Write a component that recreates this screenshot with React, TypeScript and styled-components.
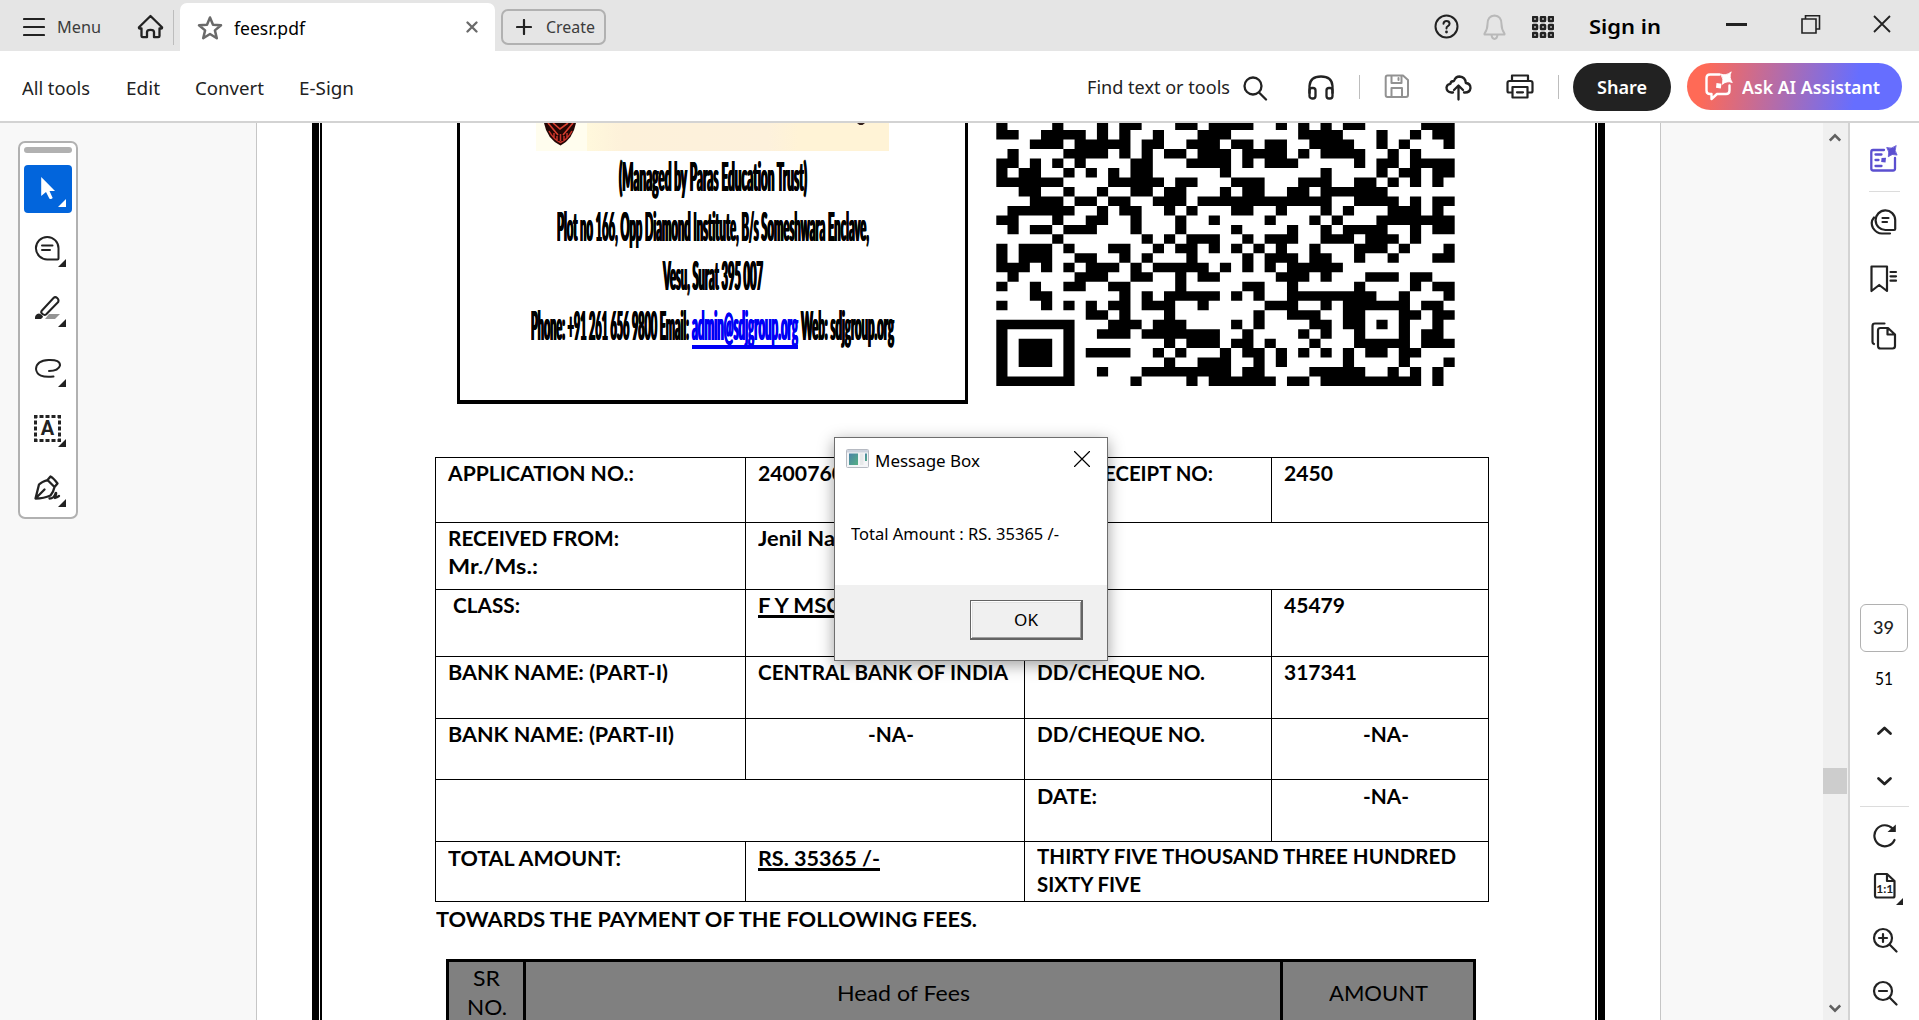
import React, { ReactNode, useLayoutEffect, useRef, useState } from "react";
import styled, { createGlobalStyle, css } from "styled-components";

const UI = `"Noto Sans", "Open Sans", sans-serif`;
const DOC = `Lato, "Liberation Sans", sans-serif`;

const Global = createGlobalStyle`
  html, body { margin: 0; padding: 0; overflow: hidden; }
  *, *::before, *::after { box-sizing: border-box; }
  body { font-family: ${UI}; color: #222; }
`;

/* ---------- text that is condensed to a set width ---------- */
const FitBox = styled.span<{ $w: number }>`
  display: inline-block;
  flex: none;
  width: ${(p) => p.$w}px;
  white-space: nowrap;
  vertical-align: top;
`;
const FitInner = styled.span`
  display: inline-block;
  transform-origin: 0 50%;
`;
function Fit({ w, children }: { w: number; children: ReactNode }) {
  const ref = useRef<HTMLSpanElement>(null);
  const [scale, setScale] = useState(1);
  useLayoutEffect(() => {
    if (ref.current) setScale(w / ref.current.getBoundingClientRect().width);
  }, []);
  return (
    <FitBox $w={w}>
      <FitInner ref={ref} style={{ transform: `scaleX(${scale})` }}>{children}</FitInner>
    </FitBox>
  );
}

/* ---------- shell ---------- */
const Shell = styled.div`
  width: 1919px;
  height: 1020px;
  display: flex;
  flex-direction: column;
  background: #fff;
  overflow: hidden;
`;
const TabBar = styled.header`
  height: 51px;
  flex: none;
  display: flex;
  align-items: flex-start;
  background: #e5e5e5;
`;
const ToolBar = styled.nav`
  height: 72px;
  flex: none;
  display: flex;
  align-items: flex-start;
  border-bottom: 2px solid #d3d3d3;
`;
const Slot = styled.div<{ $l?: number; $t?: number; $color?: string }>`
  flex: none;
  display: flex;
  margin-left: ${(p) => p.$l ?? 0}px;
  margin-top: ${(p) => p.$t ?? 0}px;
  color: ${(p) => p.$color ?? "#222"};
`;
const Label = styled.span<{ $l?: number; $t?: number; $size: number; $weight?: number; $color?: string }>`
  flex: none;
  display: block;
  margin-left: ${(p) => p.$l ?? 0}px;
  margin-top: ${(p) => p.$t ?? 0}px;
  font-size: ${(p) => p.$size}px;
  line-height: 26px;
  font-weight: ${(p) => p.$weight ?? 400};
  color: ${(p) => p.$color ?? "#222"};
`;
const Rule = styled.div<{ $l: number; $t: number; $h: number }>`
  flex: none;
  width: 1px;
  height: ${(p) => p.$h}px;
  margin: ${(p) => p.$t}px 0 0 ${(p) => p.$l}px;
  background: #bdbdbd;
`;
const FileTab = styled.div`
  flex: none;
  width: 315px;
  height: 48px;
  margin: 3px 0 0 6px;
  display: flex;
  align-items: flex-start;
  background: #fff;
  border-radius: 7px 7px 0 0;
`;
const CreateButton = styled.div`
  flex: none;
  width: 105px;
  height: 36px;
  margin: 9px 0 0 6px;
  display: flex;
  align-items: flex-start;
  border: 2px solid #b1b1b1;
  border-radius: 7px;
`;
const pill = css`
  flex: none;
  display: flex;
  align-items: flex-start;
  margin-top: 12px;
  border-radius: 24px;
`;
const SharePill = styled.div`
  ${pill}
  width: 98px;
  height: 48px;
  margin-left: 14px;
  background: #222;
`;
const AiPill = styled.div`
  ${pill}
  width: 215px;
  height: 47px;
  margin-left: 16px;
  background: linear-gradient(100deg, #ff6a56 8%, #666eff 78%);
`;

/* ---------- body ---------- */
const Body = styled.main`
  flex: 1;
  min-height: 0;
  display: flex;
`;
const Gutter = styled.aside`
  width: 256px;
  flex: none;
  padding: 18px 0 0 18px;
  background: #f8f8f8;
`;
const Palette = styled.div`
  width: 60px;
  height: 378px;
  padding: 4px;
  border: 2px solid #b1b1b1;
  border-radius: 7px;
  background: #fff;
  display: flex;
  flex-direction: column;
  gap: 12px;
`;
const Grip = styled.div`
  height: 6px;
  flex: none;
  border-radius: 3px;
  background: #b1b1b1;
`;
const ToolButton = styled.div<{ $active?: boolean }>`
  width: 48px;
  height: 48px;
  flex: none;
  border-radius: 4px;
  color: ${(p) => (p.$active ? "#fff" : "#222")};
  background: ${(p) => (p.$active ? "#0265dc" : "transparent")};
`;
const Page = styled.section`
  width: 1405px;
  flex: none;
  border: solid #c6c6c6;
  border-width: 0 1px;
  padding: 0 55px;
  background: #fff;
  overflow: hidden;
`;
const OuterFrame = styled.div`
  height: 1000px;
  border: solid #000;
  border-width: 0 7px;
  padding: 0 1px;
`;
const InnerFrame = styled.div`
  height: 100%;
  border: solid #000;
  border-width: 0 2px;
  font-family: ${DOC};
  color: #000;
`;
const Letterhead = styled.div`
  height: 281px;
  display: flex;
  margin-left: 135px;
`;
const AddressBox = styled.div`
  width: 511px;
  border: solid #000;
  border-width: 0 3px 4px 3px;
  display: flex;
  flex-direction: column;
  align-items: center;
`;
const Banner = styled.div`
  width: 353px;
  height: 28px;
  flex: none;
  display: flex;
`;
const AddressLine = styled.div`
  height: 49.6px;
  flex: none;
  line-height: 50px;
  font-size: 39px;
  font-weight: 900;
  text-shadow: 1.6px 0 0 currentColor, -1.6px 0 0 currentColor;
  display: flex;
  justify-content: center;
`;
const MailLink = styled.span`
  display: block;
  height: 49px;
  margin: 0 3px;
  color: #0000f5;
  border-bottom: 4px solid #0000f5;
`;
const QrHolder = styled.div`
  margin-left: 28px;
  flex: none;
`;
const Grid = styled.div`
  width: 1054px;
  margin: 53px 0 0 113px;
  display: grid;
  grid-template-columns: 310px 279px 247px 217px;
  grid-template-rows: 65px 67px 67px 62px 61px 62px 60px;
  border: solid #000;
  border-width: 0 1px 1px 0;
`;
const Cell = styled.div<{ $span?: number; $center?: boolean; $l?: number; $t?: number }>`
  grid-column: span ${(p) => p.$span ?? 1};
  border: solid #000;
  border-width: 1px 0 0 1px;
  padding: ${(p) => p.$t ?? 1}px 0 0 ${(p) => p.$l ?? 12.4}px;
  font-size: 20px;
  line-height: 28px;
  font-weight: 700;
  display: flex;
  flex-direction: column;
  align-items: ${(p) => (p.$center ? "center" : "flex-start")};
`;
const Underlined = styled.span`
  display: block;
  height: 27px;
  border-bottom: 3px solid #000;
`;
const Towards = styled.div`
  margin: 3px 0 0 113.5px;
  height: 28px;
  font-size: 20px;
  line-height: 28px;
  font-weight: 700;
`;
const FeesHead = styled.div`
  width: 1030px;
  height: 80px;
  margin: 26px 0 0 124px;
  display: grid;
  grid-template-columns: 74px 754px 190px;
  column-gap: 3px;
  padding: 3px 3px 0;
  background: #000;
`;
const FeesCell = styled.div<{ $t: number }>`
  background: #808080;
  padding: ${(p) => p.$t}px 0 0 1px;
  font-size: 21px;
  line-height: 29px;
  display: flex;
  flex-direction: column;
  align-items: center;
`;
const Backdrop = styled.div`
  flex: 1;
  background: #f8f8f8;
`;
const ScrollTrack = styled.div`
  width: 25px;
  flex: none;
  display: flex;
  flex-direction: column;
  background: #f0f0f0;
  color: #606060;
`;
const Thumb = styled.div`
  width: 24px;
  height: 26px;
  margin: 625px 0 202px;
  background: #cdcdcd;
`;
const Rail = styled.aside`
  width: 71px;
  flex: none;
  border-left: 2px solid #d3d3d3;
  display: flex;
  flex-direction: column;
  align-items: flex-start;
`;
const RailRule = styled.div<{ $l: number; $t: number; $w: number }>`
  width: ${(p) => p.$w}px;
  height: 1px;
  flex: none;
  margin: ${(p) => p.$t}px 0 0 ${(p) => p.$l}px;
  background: #dcdcdc;
`;
const PageInput = styled.div`
  width: 48px;
  height: 48px;
  flex: none;
  margin: 254px 0 0 10px;
  border: 1px solid #b1b1b1;
  border-radius: 6px;
  padding-right: 2px;
  display: flex;
  justify-content: center;
  font-family: ${DOC};
  font-size: 18px;
  line-height: 44px;
  font-weight: 500;
`;
const PageCount = styled.div`
  flex: none;
  margin: 13px 0 1px 25px;
  height: 26px;
  font-family: ${DOC};
  font-size: 18px;
  line-height: 26px;
  color: #000;
`;

/* ---------- message box ---------- */
const Dialog = styled.div`
  position: absolute;
  left: 834px;
  top: 437px;
  width: 274px;
  height: 224px;
  border: 1px solid #6e6e6e;
  background: #fff;
  box-shadow: 0 4px 15px rgba(0, 0, 0, 0.38);
  display: flex;
  flex-direction: column;
  color: #000;
`;
const DialogTitle = styled.div`
  height: 54px;
  display: flex;
  align-items: flex-start;
`;
const DialogText = styled.div`
  flex: 1;
  padding: 29px 0 0 16px;
  font-size: 16px;
  line-height: 26px;
`;
const DialogFooter = styled.div`
  height: 75px;
  padding: 15px 0 0 135px;
  background: #f0f0f0;
`;
const OkButton = styled.div`
  width: 113px;
  height: 40px;
  display: flex;
  justify-content: center;
  font-size: 16px;
  line-height: 34px;
  padding-top: 2px;
  border: 1px solid #646464;
  border-right-width: 2px;
  border-bottom-width: 2px;
  box-shadow: inset 1px 1px 0 #fff, inset -1px -1px 0 #a0a0a0, inset 2px 2px 0 #e3e3e3;
`;

/* ---------- icons ---------- */
type IconProps = { w: number; h: number; sw?: number; children: ReactNode };
const Svg = styled.svg`
  display: block;
`;
const Icon = ({ w, h, sw = 2, children }: IconProps) => (
  <Svg width={w} height={h} viewBox={`0 0 ${w} ${h}`} fill="none" stroke="currentColor" strokeWidth={sw}
    strokeLinecap="round" strokeLinejoin="round">
    {children}
  </Svg>
);
const solid = { fill: "currentColor", stroke: "none" };

const Tool = ({ active, children }: { active?: boolean; children: ReactNode }) => (
  <ToolButton $active={active}>
    <Icon w={48} h={48}>
      {children}
      <path d="M34 42 42 34V42Z" {...solid} />
    </Icon>
  </ToolButton>
);

/* ---------- QR code: dark module spans of each row ---------- */
const QR: string[] = [
  "0 5 9 11-12 16-17 19-22 25 27 29 31-32 38-40",
  "0-1 4-7 9 11 14 18-20 27-30 34 37 39-40",
  "3-5 7-11 13-14 17-19 21-22 24-25 28-31 34 36 40",
  "1 6-9 11 13 15-16 18-20 22-25 27 29-32 35 37",
  "0-1 3 5 7 12-13 17-20 22 24-26 32 34-35 37-40",
  "0 2-3 6 8 10 12-13 20 29 34 36-37 39-40",
  "0-5 10-14 16-17 21-23 27-29 32-33 35 37 39",
  "2-3 6 9 12-13 15-16 20 22-23 26-27 29-34",
  "3-5 7-8 10-11 14-16 18-29 32-35 37 39-40",
  "1-6 9 11-12 15 17 21-22 25 29 31 35-37 39",
  "0-1 5 8-9 12 16 19 24 28 30 34-40",
  "1 3-4 6-8 12 16 21 26 29 31-34 37 39-40",
  "5 13 15 17-19 22 24-26 29-31 33-35 37",
  "0 2-4 6 10-11 14 16-17 19 21 23 25 28 32-34 36 40",
  "0 2-4 7-8 11 13 17 22 24-26 28-29 32 35 39-40",
  "0-2 4 6 8-10 12 14-18 20 22 24 26-30",
  "1 7-9 12-13 16 18-19 25-27 29 33-35 37-38",
  "0 3 6-7 10-11 16 22-23 26 32 37 39-40",
  "3-4 11 13 15-19 21 23 26-33 36 40",
  "0 4 6 8 10-11 13-15 18 24-26 29 31-36 38-39",
  "8-9 11 15 23 26-28 31-32 36-37 39-40",
  "0-6 10-12 14-16 21 23 28-29 31-32 34 36 39",
  "0 6 9-11 13-19 22 27 29 32 36 38-39",
  "0 2-4 6 15 17-19 21-22 24 28 32-36 38-40",
  "0 2-4 6 8-11 14 16 20 22-23 25 27 29 31 33-34 36-37",
  "0 2-4 6 15 18-20 23 25 31 36 40",
  "0 6 9 13-20 22-23 28-32 35 37 39",
  "0-6 12 17 19-24 26-27 29-37 39",
];
const MW = 11.18;
const MH = 9.48;
const qrPath = QR.map((row, y) =>
  row.split(" ").map((s) => {
    const [a, b = a] = s.split("-").map(Number);
    const y0 = (y * MH - 2.4).toFixed(2);
    return `M${(a * MW).toFixed(2)} ${y0}h${((b - a + 1) * MW).toFixed(2)}v${MH}h-${((b - a + 1) * MW).toFixed(2)}z`;
  }).join("")
).join("");

const BannerArt = () => (
  <svg width="353" height="28" viewBox="0 0 353 28">
    <defs>
      <linearGradient id="cream">
        <stop offset="0" stopColor="#fff8dc" />
        <stop offset="0.12" stopColor="#fdf1da" />
        <stop offset="0.6" stopColor="#fdf1dc" />
        <stop offset="0.7" stopColor="#fff3d6" />
        <stop offset="1" stopColor="#fff3d6" />
      </linearGradient>
    </defs>
    <rect width="51" height="28" fill="#fffdee" />
    <rect x="51" width="302" height="28" fill="url(#cream)" />
    <path d="M8 0H40Q37 16 24.500 22.500Q11 16 8 0Z" fill="#240705" />
    <path d="M12 0 22 12M37 0 27 12M17 0l7 6 8-6" stroke="#d8402f" strokeWidth="1.600" fill="none" />
    <path d="M13 8q5 9 11.500 11.500Q31 17 36 8M18 10v5M21 13v5M24.500 11v7M28 13v5M31 10v5" stroke="#c9332a" strokeWidth="1.500" fill="none" />
    <path d="M321 0h8l-2.500 2h-3z" fill="#33201c" />
  </svg>
);

const AiStar = () => <path d="M5.500-7Q3-1 7 4.500Q.8 2-4 6.500Q-2 .5-6-5Q-.5-2.500 5.500-7Z" fill="currentColor" strokeWidth="1" />;

export default function App() {
  return (
    <Shell>
      <Global />
      <TabBar>
        <Slot $l={23} $t={17}><Icon w={22} h={20} sw={2.200}><path d="M1 2H21M1 10H21M1 18H21" /></Icon></Slot>
        <Label $l={12} $t={14} $size={16.500} $color="#3c3c3c"><Fit w={44}>Menu</Fit></Label>
        <Slot $l={36} $t={14}>
          <Icon w={27} h={25} sw={2.300}>
            <path d="M13.500 2 2 13.200Q1.600 14.500 3 14.500H4.500V22Q4.500 23.200 5.700 23.200H10V18Q10 15.800 13.500 15.800T17 18V23.200H21.300Q22.500 23.200 22.500 22V14.500H24Q25.400 14.500 25 13.200Z" />
          </Icon>
        </Slot>
        <Rule $l={9} $t={10} $h={35} />
        <FileTab>
          <Slot $l={17} $t={12} $color="#6a6a6a">
            <Icon w={26} h={26} sw={2.500}>
              <path d="M13 2.500 16 9.800 24 10.300 17.900 15.400 19.800 23.200 13 19 6.200 23.200 8.100 15.400 2 10.300 10 9.800Z" />
            </Icon>
          </Slot>
          <Label $l={11} $t={12} $size={18.500} $color="#000"><Fit w={71}>feesr.pdf</Fit></Label>
          <Slot $l={161} $t={18} $color="#6a6a6a"><Icon w={12} h={12} sw={2.300}><path d="M1.500 1.500 10.500 10.500M10.500 1.500 1.500 10.500" /></Icon></Slot>
        </FileTab>
        <CreateButton>
          <Slot $l={13} $t={8}><Icon w={16} h={16} sw={2.200}><path d="M8 1V15M1 8H15" /></Icon></Slot>
          <Label $l={14} $t={3} $size={16.500} $color="#3c3c3c"><Fit w={49}>Create</Fit></Label>
        </CreateButton>
        <Slot $l={828} $t={14}>
          <Icon w={25} h={25}>
            <circle cx="12.500" cy="12.500" r="11" />
            <path d="M9.500 9.800Q9.700 7 12.500 7T15.600 9.600Q15.600 11.200 13.900 12.200T12.500 14.500" />
            <circle cx="12.500" cy="18" r="1.400" {...solid} />
          </Icon>
        </Slot>
        <Slot $l={24} $t={14} $color="#b9b9b9">
          <Icon w={23} h={26}>
            <path d="M11.500 1.500Q18.500 2 18.500 10Q18.500 15.500 21.500 19.500V20.500H1.500V19.500Q4.500 15.500 4.500 10Q4.500 2 11.500 1.500ZM8.500 21Q9 25 11.500 25T14.500 21" />
          </Icon>
        </Slot>
        <Slot $l={26} $t={16}>
          <Icon w={22} h={22}>
            {[0, 8, 16].map((x) => [0, 8, 16].map((y) => <rect key={`${x}${y}`} x={x + 1} y={y + 1} width="4" height="4" rx=".6" strokeWidth="2.500" />))}
          </Icon>
        </Slot>
        <Label $l={35} $t={14} $size={20} $weight={600} $color="#000"><Fit w={72}>Sign in</Fit></Label>
        <Slot $l={65} $t={23}><Icon w={21} h={3} sw={3}><path d="M0 1.500H21" strokeLinecap="butt" /></Icon></Slot>
        <Slot $l={54} $t={14}>
          <Icon w={20} h={20} sw={1.600}><path d="M1 5H15V19H1ZM4.500 5V1.800H18.500V15H15" strokeLinejoin="miter" /></Icon>
        </Slot>
        <Slot $l={52} $t={15}><Icon w={18} h={18} sw={1.800}><path d="M1 1 17 17M17 1 1 17" strokeLinecap="butt" /></Icon></Slot>
      </TabBar>

      <ToolBar>
        <Label $l={22} $t={24} $size={18.500}><Fit w={68}>All tools</Fit></Label>
        <Label $l={36} $t={24} $size={18.500}><Fit w={34}>Edit</Fit></Label>
        <Label $l={35} $t={24} $size={18.500}><Fit w={69}>Convert</Fit></Label>
        <Label $l={35} $t={24} $size={18.500}><Fit w={55}>E-Sign</Fit></Label>
        <Label $l={733} $t={23} $size={18.500}><Fit w={143}>Find text or tools</Fit></Label>
        <Slot $l={13} $t={25}><Icon w={25} h={25} sw={2.300}><circle cx="10" cy="10" r="8.500" /><path d="M16 16.500 23 23.500" /></Icon></Slot>
        <Slot $l={40} $t={24}>
          <Icon w={26} h={25} sw={2.300}>
            <path d="M1.500 18V11Q2 1.500 13 1.500T24.500 11V18" />
            <rect x="1.500" y="13" width="6" height="10.500" rx="2.500" /><rect x="18.500" y="13" width="6" height="10.500" rx="2.500" />
          </Icon>
        </Slot>
        <Rule $l={25} $t={24} $h={24} />
        <Slot $l={24} $t={23} $color="#929292">
          <Icon w={26} h={25}>
            <path d="M3.500 1.500H19L24 6V21Q24 23 22 23H3.500Q1.700 23 1.700 21V3.500Q1.700 1.500 3.500 1.500ZM7.500 2V9H17.500V2M14.500 4V6M7.500 23V14H18V23" />
          </Icon>
        </Slot>
        <Slot $l={35} $t={24}>
          <Icon w={27} h={26} sw={2.300}>
            <path d="M8 17.500H6.500Q1.500 17 1.500 12.500Q2 9 5.500 8.800Q5.500 6 9 6Q10.500 1.500 14.500 1.500Q20.500 2 20.800 8Q25.500 8.500 25.500 13Q25 17.500 20 17.500H19M13.500 24.500V11M9 15 13.500 10.500 18 15" />
          </Icon>
        </Slot>
        <Slot $l={34} $t={23}>
          <Icon w={28} h={25} sw={2.200}>
            <path d="M6 7V1.500H22V7M6 18.500H3Q1.500 18.500 1.500 17V9Q1.500 7 3.500 7H24.500Q26.500 7 26.500 9V17Q26.500 18.500 25 18.500H22M6.500 13H21.500V23.500H6.500ZM11 18.300H17" />
          </Icon>
        </Slot>
        <Rule $l={24} $t={24} $h={24} />
        <SharePill><Label $l={24} $t={11} $size={18} $weight={600} $color="#fff"><Fit w={50}>Share</Fit></Label></SharePill>
        <AiPill>
          <Slot $l={17} $t={8} $color="#fff">
            <Icon w={30} h={30} sw={2.400}>
              <path d="M15.500 3.500H6Q2.500 3.500 2.500 7V19.500Q2.500 23 6 23H7.500V28L13 23H22Q25.500 23 25.500 19.500V14.500" />
              <g transform="translate(22 7.500) scale(.9)"><AiStar /></g>
              <path d="M12.500 12 17.500 12.800 16.800 17.500 12 16.800Z" {...solid} />
            </Icon>
          </Slot>
          <Label $l={8} $t={11} $size={18} $weight={600} $color="#fff"><Fit w={138}>Ask AI Assistant</Fit></Label>
        </AiPill>
      </ToolBar>

      <Body>
        <Gutter>
          <Palette>
            <Grip />
            <Tool active><path d="M17.200 12V31L22 27 25.300 33.500Q27 34.800 28.700 33L25.500 26H31Z" {...solid} /></Tool>
            <Tool><path d="M34.500 23.500V33.500Q34.500 34.500 33.500 34.500H23.500A11.300 11.300 0 1 1 34.500 23.500ZM18 20.500H28.500M18 25H26" /></Tool>
            <Tool>
              <path d="M17.500 26 29.500 13Q31.200 11.300 33.200 13T34.200 17L22 29.500Q20.500 30.500 18.500 29Q16.500 27.500 17.500 26Z" />
              <path d="M11 34Q10.500 29 15 28.500Q19 30 19 32L17 34Z" {...solid} />
              <path d="M25 29H36L31 34H21Z" fill="#959595" stroke="none" />
            </Tool>
            <Tool><path d="M29.500 31.500Q13 33.500 12 24Q12.500 15.500 24.500 15T36 20.500Q34.500 26 25 26" /></Tool>
            <Tool>
              <rect x="11.500" y="11.500" width="24" height="24" strokeWidth="3" strokeDasharray="4 2" strokeDashoffset="2" strokeLinecap="butt" strokeLinejoin="miter" />
              <text x="23.500" y="30" textAnchor="middle" fontFamily="Roboto, sans-serif" fontWeight="700" fontSize="20" {...solid}>A</text>
            </Tool>
            <Tool>
              <path strokeWidth="2.300" d="M11.500 33.500 15 19.500Q17.500 17 23.500 15L30.500 22Q29.500 27 26.500 30.500Q20 33.500 11.500 33.500ZM12 33 20.500 24.500M23.500 15 26.500 11.500Q29.500 13 33.500 18.500L30.500 22M25.500 33.500Q30 33.500 31.500 28.500Q32.500 27 32 29.500L31 33Q33 32.500 35 31" />
            </Tool>
          </Palette>
        </Gutter>

        <Page>
          <OuterFrame>
            <InnerFrame>
              <Letterhead>
                <AddressBox>
                  <Banner><BannerArt /></Banner>
                  <AddressLine><Fit w={188}>(Managed by Paras Education Trust)</Fit></AddressLine>
                  <AddressLine><Fit w={312}>Plot no 166, Opp Diamond Institute, B/s Someshwara Enclave,</Fit></AddressLine>
                  <AddressLine><Fit w={100}>Vesu, Surat 395 007</Fit></AddressLine>
                  <AddressLine>
                    <Fit w={158}>Phone: +91 261 656 9800 Email:</Fit>
                    <MailLink><Fit w={106}>admin@sdjgroup.org</Fit></MailLink>
                    <Fit w={93}>Web: sdjgroup.org</Fit>
                  </AddressLine>
                </AddressBox>
                <QrHolder>
                  <svg width="460" height="264" viewBox="-.3 0 460 264"><path d={qrPath} fill="#000" /></svg>
                </QrHolder>
              </Letterhead>

              <Grid>
                <Cell><Fit w={186}>APPLICATION NO.:</Fit></Cell>
                <Cell><Fit w={86}>2400760</Fit></Cell>
                <Cell $l={66}><Fit w={122}>RECEIPT NO:</Fit></Cell>
                <Cell><Fit w={49}>2450</Fit></Cell>

                <Cell><Fit w={171}>RECEIVED FROM:</Fit><Fit w={90}>Mr./Ms.:</Fit></Cell>
                <Cell $span={3}><Fit w={77}>Jenil Na</Fit></Cell>

                <Cell $l={17}><Fit w={67}>CLASS:</Fit></Cell>
                <Cell><Underlined><Fit w={83}>F Y MSC</Fit></Underlined></Cell>
                <Cell />
                <Cell><Fit w={61}>45479</Fit></Cell>

                <Cell><Fit w={220}>BANK NAME: (PART-I)</Fit></Cell>
                <Cell><Fit w={250}>CENTRAL BANK OF INDIA</Fit></Cell>
                <Cell><Fit w={168}>DD/CHEQUE NO.</Fit></Cell>
                <Cell><Fit w={73}>317341</Fit></Cell>

                <Cell><Fit w={226}>BANK NAME: (PART-II)</Fit></Cell>
                <Cell $center><Fit w={46}>-NA-</Fit></Cell>
                <Cell><Fit w={168}>DD/CHEQUE NO.</Fit></Cell>
                <Cell $center><Fit w={46}>-NA-</Fit></Cell>

                <Cell $span={2} />
                <Cell $t={2}><Fit w={60}>DATE:</Fit></Cell>
                <Cell $t={2} $center><Fit w={46}>-NA-</Fit></Cell>

                <Cell $t={2}><Fit w={173}>TOTAL AMOUNT:</Fit></Cell>
                <Cell $t={2}><Underlined><Fit w={122}>RS. 35365 /-</Fit></Underlined></Cell>
                <Cell $span={2} $t={0}>
                  <Fit w={419}>THIRTY FIVE THOUSAND THREE HUNDRED</Fit>
                  <Fit w={104}>SIXTY FIVE</Fit>
                </Cell>
              </Grid>

              <Towards><Fit w={541}>TOWARDS THE PAYMENT OF THE FOLLOWING FEES.</Fit></Towards>

              <FeesHead>
                <FeesCell $t={1}><Fit w={27}>SR</Fit><Fit w={40}>NO.</Fit></FeesCell>
                <FeesCell $t={16}><Fit w={133}>Head of Fees</Fit></FeesCell>
                <FeesCell $t={16}><Fit w={99}>AMOUNT</Fit></FeesCell>
              </FeesHead>
            </InnerFrame>
          </OuterFrame>
        </Page>

        <Backdrop />
        <ScrollTrack>
          <Slot $l={6} $t={9}><Icon w={12} h={11} sw={2.600}><path d="M.8 8.500 6 3.300 11.200 8.500" strokeLinecap="butt" strokeLinejoin="miter" stroke="#606060" /></Icon></Slot>
          <Thumb />
          <Slot $l={6} $t={7}><Icon w={12} h={11} sw={2.600}><path d="M.8 2.500 6 7.700 11.200 2.500" strokeLinecap="butt" strokeLinejoin="miter" stroke="#606060" /></Icon></Slot>
        </ScrollTrack>

        <Rail>
          <Slot $l={20} $t={22} $color="#5b4fd0">
            <Icon w={28} h={28} sw={2.300}>
              <path d="M14 5H3Q1.300 5 1.300 7V23.500Q1.300 25.500 3.300 25.500H23Q25 25.500 25 23.500V13M5.500 9.500H11.500M5.500 15H8.500M5.500 21H11.500" />
              <g transform="translate(21.500 6.500) scale(.8)"><AiStar /></g>
              <path d="M11.500 13 16 12.800 15.500 17.500 11.200 17Z" {...solid} />
            </Icon>
          </Slot>
          <RailRule $l={19} $t={18} $w={31} />
          <Slot $l={20} $t={16}>
            <Icon w={28} h={27} sw={2.200}>
              <path d="M25.200 12V21Q25.200 22 24.200 22H15.500A9.800 9.800 0 1 1 25.200 12ZM12.500 10H18.500M12.500 14H17M4 9.500Q0 14 3 20Q6.500 25.500 12 25.500H20" />
            </Icon>
          </Slot>
          <Slot $l={20} $t={30}>
            <Icon w={28} h={28} sw={2.200}>
              <path d="M1.500 1.500H17V26L9.200 20 1.500 26ZM20.500 7H26M20.500 11.300H26M20.500 15.700H26" />
            </Icon>
          </Slot>
          <Slot $l={21} $t={29}>
            <Icon w={26} h={28} sw={2.200}>
              <path d="M13.500 1.500H4Q1.500 1.500 1.500 4V20Q1.500 21.500 3 22M9.500 6H17L24 12.500V24Q24 26.500 21.500 26.500H9.500Q7 26.500 7 24V8.500Q7 6 9.500 6ZM16.500 6.500V12.500H23.500" />
            </Icon>
          </Slot>
          <PageInput><Fit w={21}>39</Fit></PageInput>
          <PageCount><Fit w={18}>51</Fit></PageCount>
          <Slot $l={26} $t={33}><Icon w={17} h={11} sw={2.800}><path d="M2.500 8.500 8.500 3 14.500 8.500" /></Icon></Slot>
          <Slot $l={26} $t={40}><Icon w={17} h={11} sw={2.800}><path d="M2.500 2.500 8.500 8 14.500 2.500" /></Icon></Slot>
          <RailRule $l={10} $t={19} $w={49} />
          <Slot $l={22} $t={16}>
            <Icon w={26} h={25} sw={2.200}>
              <path d="M22.500 17A10.500 10.500 0 1 1 20.500 5.500" /><path d="M23.800 1.500V9H15.500Z" {...solid} />
            </Icon>
          </Slot>
          <Slot $l={23} $t={24}>
            <Icon w={30} h={33} sw={2.200}>
              <path d="M4 2H14L21.500 9V24Q21.500 25.500 20 25.500H4Q2 25.500 2 23.500V4Q2 2 4 2ZM14 2.500V9H21" />
              <text x="11.800" y="21" textAnchor="middle" fontFamily="Lato, sans-serif" fontWeight="700" fontSize="12" {...solid}>1:1</text>
              <path d="M23 33 30 26V33Z" {...solid} />
            </Icon>
          </Slot>
          <Slot $l={22} $t={22}><Icon w={27} h={26} sw={2.200}><circle cx="11" cy="11" r="9" /><path d="M17.800 17.800 24.500 24.500M7 11H15M11 7V15" /></Icon></Slot>
          <Slot $l={22} $t={27}><Icon w={27} h={26} sw={2.200}><circle cx="11" cy="11" r="9" /><path d="M17.800 17.800 24.500 24.500M7 11H15" /></Icon></Slot>
        </Rail>
      </Body>

      <Dialog>
        <DialogTitle>
          <Slot $l={11} $t={11}>
            <svg width="23" height="19" viewBox="0 0 23 19">
              <defs>
                <linearGradient id="pane" x1="0" y1="0" x2="1" y2="1">
                  <stop offset="0" stopColor="#4a82a8" /><stop offset="1" stopColor="#55b083" />
                </linearGradient>
              </defs>
              <rect x=".5" y=".5" width="22" height="18" rx="1" fill="#f4f5f7" stroke="#b6bac2" />
              <rect x="1" y="1" width="21" height="2.500" fill="#cdd3de" />
              <rect x="3" y="4.500" width="9" height="11.500" fill="url(#pane)" />
              <rect x="14" y="4.500" width="3.500" height="11.500" fill="#e7e9ea" />
              <rect x="19" y="4.500" width="2" height="7.500" fill="url(#pane)" />
            </svg>
          </Slot>
          <Label $l={6} $t={10} $size={16.500} $color="#000"><Fit w={105}>Message Box</Fit></Label>
          <Slot $l={94} $t={13} $color="#000"><Icon w={16} h={16} sw={1.200}><path d="M.5 .5 15.500 15.500M15.500 .5 .5 15.500" /></Icon></Slot>
        </DialogTitle>
        <DialogText><Fit w={208}>Total Amount : RS. 35365 /-</Fit></DialogText>
        <DialogFooter><OkButton><Fit w={24}>OK</Fit></OkButton></DialogFooter>
      </Dialog>
    </Shell>
  );
}
